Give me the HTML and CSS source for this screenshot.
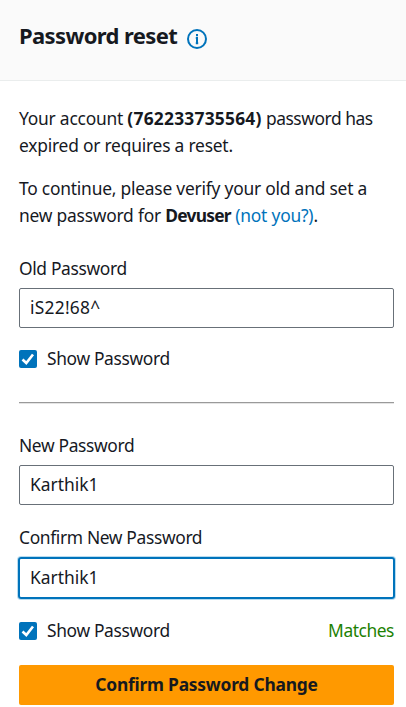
FILE: index.html
```html
<!DOCTYPE html>
<html lang="en">
<head>
<meta charset="utf-8">
<title>Password reset</title>
<link rel="stylesheet" href="styles.css">
</head>
<body>
<header class="header">
  <h1>Password reset</h1>
  <svg class="info" viewBox="0 0 20 20" aria-hidden="true"><circle cx="10" cy="10" r="9"/><path d="M8.8 9H10v6M8.8 14.3h2.4M10 5v2.2"/></svg>
</header>
<main class="content">
  <p class="intro">Your account <b class="account">(762233735564)</b> <span class="tight">password has</span><br>expired or requires a reset.</p>
  <p class="intro second">To continue, please verify your old and set a<br>new password for <b class="user">Devuser</b> <a>(not you?)</a>.</p>
  <label class="label">Old Password</label>
  <div class="field code">iS22!68^</div>
  <div class="options"><span class="check"><svg class="box" viewBox="0 0 18 18"><path d="M3.5 9.5l3.8 3.5L14 4.5"/></svg>Show Password</span></div>
  <hr>
  <label class="label">New Password</label>
  <div class="field">Karthik1</div>
  <label class="label confirm">Confirm New Password</label>
  <div class="field focused">Karthik1</div>
  <div class="options last"><span class="check"><svg class="box" viewBox="0 0 18 18"><path d="M3.5 9.5l3.8 3.5L14 4.5"/></svg>Show Password</span><span class="matches">Matches</span></div>
  <button class="submit">Confirm Password Change</button>
</main>
</body>
</html>
```
FILE: styles.css
```css
* { box-sizing: border-box; }
body { margin: 0; width: 406px; height: 707px; overflow: hidden; background: #fff; color: #16191f; font: 17.4px/27px "Noto Sans", sans-serif; letter-spacing: -0.22px; }
.header { display: flex; align-items: center; gap: 10px; height: 81px; padding: 0 19px 11px; background: #fafafa; border-bottom: 1px solid #eaeded; }
h1 { margin: 0; font-size: 22px; line-height: 30px; font-weight: 700; letter-spacing: -0.62px; }
.info { width: 20px; height: 20px; margin-top: 8px; fill: none; stroke: #0073bb; stroke-width: 2; }
.content { display: flex; flex-direction: column; padding: 24px 12px 0 19px; }
.intro { margin: 0; white-space: nowrap; }
.second { margin-top: 16px; }
.account { letter-spacing: 0.22px; }
.tight { letter-spacing: -0.45px; }
.user { letter-spacing: -0.75px; }
a { color: #0073bb; letter-spacing: -0.2px; }
.label { height: 27px; margin-top: 26px; letter-spacing: -0.35px; }
.field { height: 40px; margin-top: 6px; padding: 0 10px; border: 1px solid #687078; border-radius: 2px; line-height: 37px; letter-spacing: 0; }
.code { letter-spacing: 0.25px; }
.confirm { margin-top: 19px; }
.focused { height: 42px; margin: 6px -1px 0; border: 2px solid #0073bb; border-radius: 3px; line-height: 37px; box-shadow: 0 0 0 1px #b8dcf0; }
.options { display: flex; justify-content: space-between; margin-top: 17px; letter-spacing: -0.35px; }
.last { margin-top: 18px; }
.check { display: flex; align-items: center; gap: 10px; }
.box { width: 18px; height: 18px; background: #0073bb; border-radius: 2px; fill: none; stroke: #fff; stroke-width: 2.6; }
hr { width: 100%; height: 2px; margin: 30px 0 2px; border: 0; border-top: 1px solid #9a9a9a; background: #e4e4e4; }
.matches { color: #1d8102; letter-spacing: -0.45px; }
.submit { height: 40px; margin-top: 21px; padding: 0 0 2px; border: 0; border-radius: 2px; background: #ff9900; color: #16191f; font: 700 17.4px/38px "Noto Sans", sans-serif; letter-spacing: -0.22px; }
```
